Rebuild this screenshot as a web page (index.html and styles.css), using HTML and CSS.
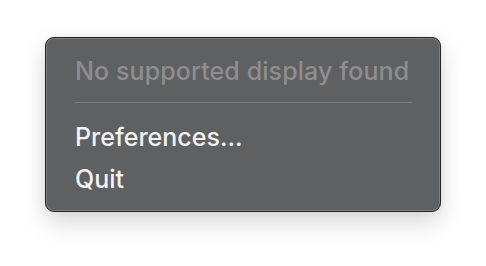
FILE: index.html
```html
<!DOCTYPE html>
<html>
<head>
<meta charset="utf-8">
<link rel="stylesheet" href="styles.css">
</head>
<body>
<div class="menu">
  <div class="item disabled">No supported display found</div>
  <div class="sep"></div>
  <div class="item">Preferences...</div>
  <div class="item">Quit</div>
</div>
</body>
</html>
```
FILE: styles.css
```css
html, body {
  margin: 0;
  padding: 0;
  background: #ffffff;
}
body {
  width: 486px;
  height: 266px;
  overflow: hidden;
  font-family: Inter, "Liberation Sans", sans-serif;
}
.menu {
  box-sizing: border-box;
  margin: 37px 0 0 45px;
  width: 396px;
  height: 175px;
  background: #5f6062;
  border: 1px solid #262626;
  border-radius: 9px;
  box-shadow: inset 0 0 0 1px #7d7d7e, 0 10px 24px rgba(0, 0, 0, 0.16), 0 0 6px rgba(0,0,0,0.06);
  padding: 12px 28px 11px 29px;
}
.item {
  height: 42px;
  line-height: 42px;
  font-size: 25px;
  font-weight: 500;
  color: #f2f2f2;
  white-space: nowrap;
}
.disabled {
  color: #8e8e90;
  letter-spacing: 0.1px;
}
.sep {
  height: 1px;
  background: #7c7c7e;
  margin: 10px 0 13px 0;
}
```
